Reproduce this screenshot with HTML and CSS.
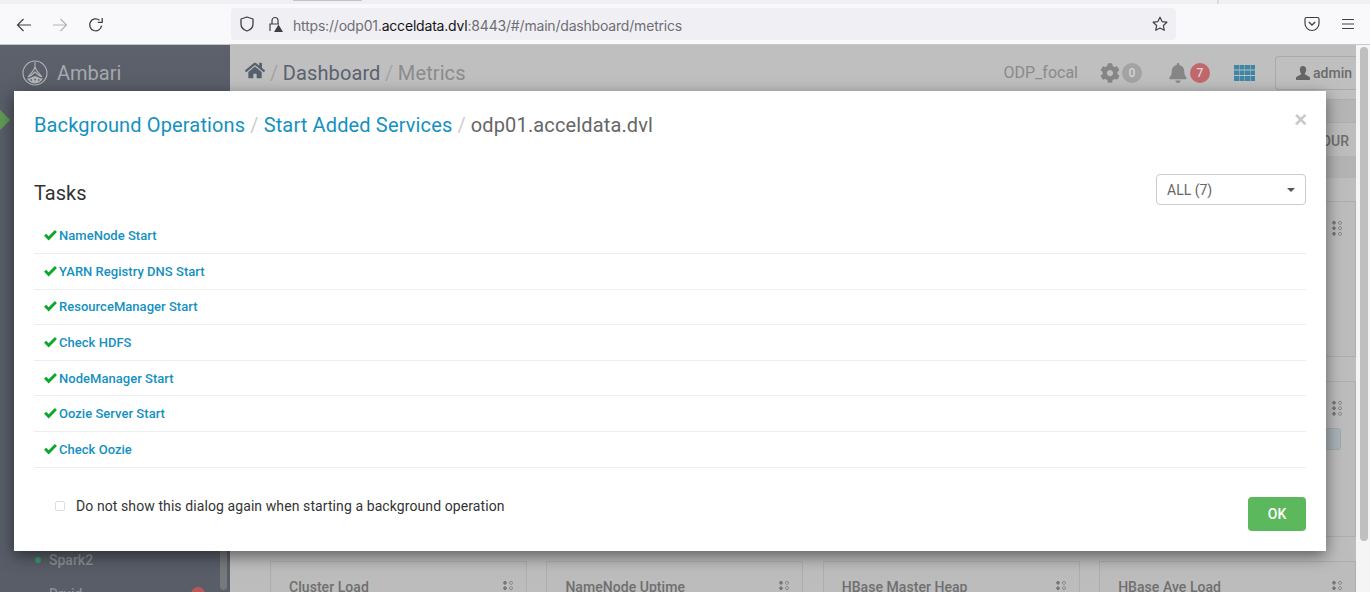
FILE: index.html
```html
<!DOCTYPE html>
<html lang="en">
<head>
<meta charset="utf-8">
<title>Ambari - Dashboard</title>
<link rel="stylesheet" href="styles.css">
</head>
<body>
<div class="tabstrip"><span class="tab-edge"></span><span class="tab-mark"></span></div>
<div class="toolbar">
  <div class="nav-buttons">
    <svg class="tb-icon" viewBox="0 0 16 16"><path d="M15 8H1.500M7.500 2 1.500 8l6 6" fill="none" stroke="#3f3f48" stroke-width="1.200"/></svg>
    <svg class="tb-icon" viewBox="0 0 16 16"><path d="M1 8h13.500M8.500 2l6 6-6 6" fill="none" stroke="#b4b4b8" stroke-width="1.200"/></svg>
    <svg class="tb-icon" viewBox="0 0 16 16"><path d="M13.600 8.700A6 6 0 1 1 11.500 3.200M14.200 1v4.400H9.800" fill="none" stroke="#3f3f48" stroke-width="1.300"/></svg>
  </div>
  <div class="urlbar">
    <svg class="shield" viewBox="0 0 16 16"><path d="M8 1 2 3v5c0 3.600 3 6 6 7 3-1 6-3.400 6-7V3z" fill="none" stroke="#3f3f48" stroke-width="1.300" stroke-linejoin="round"/></svg>
    <svg class="lock" viewBox="0 0 16 16"><path d="M3 15V8h9M5 8V4.500a3 3 0 0 1 6 0V8" fill="none" stroke="#3f3f48" stroke-width="1.200"/><path d="M11.500 8.500 16 16H7z" fill="#3f3f48"/></svg>
    <span class="url"><span class="url-dim">https://odp01.</span>acceldata.dvl<span class="url-dim">:8443/#/main/dashboard/metrics</span></span>
    <svg class="star" viewBox="0 0 16 16"><path d="m8 1.200 2.100 4.400 4.800.6-3.500 3.300.9 4.800L8 12l-4.300 2.300.9-4.800L1.100 6.200l4.800-.6z" fill="none" stroke="#3f3f48" stroke-width="1.200" stroke-linejoin="round"/></svg>
  </div>
  <div class="tool-right">
    <svg class="tb-icon" viewBox="0 0 16 16"><path d="M2.500 1.500h11A1.500 1.500 0 0 1 15 3v4.500a7 7 0 0 1-14 0V3a1.500 1.500 0 0 1 1.500-1.500z" fill="none" stroke="#3f3f48" stroke-width="1.200"/><path d="m4.800 6 3.200 3 3.200-3" fill="none" stroke="#3f3f48" stroke-width="1.300"/></svg>
    <svg class="tb-icon" viewBox="0 0 16 16"><path d="M2 3.500h12M2 8h12M2 12.500h12" stroke="#3f3f48" stroke-width="1.200"/></svg>
  </div>
</div>

<div class="page">
  <aside class="sidebar">
    <div class="brand">
      <svg class="logo" viewBox="0 0 26 26">
        <circle cx="13" cy="13" r="12" fill="none" stroke="#b3b4b6" stroke-width="1.100"/>
        <path d="M13 2v6M13 7c-1 4-4 6-7 10M13 7c1 4 4 6 7 10M6 17c3-1 5-3 7-5 2 2 4 4 7 5" fill="none" stroke="#b3b4b6" stroke-width="1.100"/>
        <path d="M5 18.500c3 .5 6-2.500 8-2.500s5 3 8 2.500c-1.500 3-5 5-8 5s-6.500-2-8-5z" fill="#b3b4b6"/>
        <path d="M8.500 20h1.500M12.300 19.500h1.500M16 20h1.500" stroke="#585d68" stroke-width="1.300"/>
      </svg>
      <span class="brand-name">Ambari</span>
    </div>
    <span class="active-mark"></span>
    <ul class="services">
      <li class="service"><span class="dot"></span>Spark2</li>
      <li class="service service-plain">Druid<span class="alert"></span></li>
    </ul>
    <span class="side-thumb"></span>
  </aside>

  <main class="main">
    <header class="topbar">
      <svg class="home" viewBox="0 0 576 512"><path d="M280.370 148.260 96 300.110V464a16 16 0 0 0 16 16l112.060-.29a16 16 0 0 0 15.920-16V368a16 16 0 0 1 16-16h64a16 16 0 0 1 16 16v95.640a16 16 0 0 0 16 16.050L464 480a16 16 0 0 0 16-16V300L295.670 148.260a12.190 12.190 0 0 0-15.300 0zM571.600 251.470 488 182.560V44.050a12 12 0 0 0-12-12h-56a12 12 0 0 0-12 12v72.610L318.470 43a48 48 0 0 0-61 0L4.340 251.470a12 12 0 0 0-1.600 16.900l25.500 31A12 12 0 0 0 45.150 301l235.220-193.740a12.190 12.190 0 0 1 15.300 0L530.900 301a12 12 0 0 0 16.900-1.600l25.500-31a12 12 0 0 0-1.700-16.930z"/></svg>
      <span class="crumb"><span class="slash">/</span><span class="crumb-strong">Dashboard</span><span class="slash">/</span><span class="crumb-dim">Metrics</span></span>
      <span class="cluster">ODP_focal</span>
      <span class="status gear-status">
        <svg class="gear" viewBox="0 0 512 512"><path d="M487.400 315.700l-42.600-24.600c4.300-23.200 4.300-47 0-70.200l42.600-24.600c4.900-2.800 7.100-8.600 5.500-14-11.100-35.600-30-67.800-54.700-94.600-3.800-4.100-10-5.100-14.800-2.300L380.800 110c-17.900-15.400-38.500-27.300-60.800-35.100V25.800c0-5.600-3.900-10.500-9.400-11.700-36.700-8.200-74.300-7.800-109.200 0-5.500 1.200-9.400 6.100-9.400 11.700V75c-22.200 7.900-42.800 19.800-60.800 35.100L88.700 85.500c-4.900-2.800-11-1.900-14.800 2.300-24.700 26.700-43.600 58.900-54.700 94.600-1.700 5.400.6 11.200 5.500 14L67.300 221c-4.300 23.200-4.300 47 0 70.200l-42.600 24.600c-4.900 2.800-7.100 8.600-5.500 14 11.100 35.600 30 67.800 54.700 94.600 3.800 4.100 10 5.100 14.800 2.300l42.600-24.600c17.900 15.400 38.500 27.300 60.800 35.100v49.200c0 5.600 3.900 10.500 9.400 11.700 36.700 8.200 74.300 7.800 109.200 0 5.500-1.200 9.400-6.100 9.400-11.700v-49.200c22.200-7.900 42.800-19.800 60.800-35.100l42.600 24.600c4.900 2.800 11 1.900 14.800-2.300 24.700-26.700 43.600-58.900 54.700-94.600 1.500-5.500-.7-11.300-5.600-14.100zM256 336c-44.100 0-80-35.900-80-80s35.900-80 80-80 80 35.900 80 80-35.900 80-80 80z"/></svg>
        <span class="badge badge-grey">0</span>
      </span>
      <span class="status bell-status">
        <svg class="bell" viewBox="0 0 448 512"><path d="M224 512c35.320 0 63.970-28.650 63.970-64H160.030c0 35.350 28.650 64 63.970 64zm215.390-149.710c-19.320-20.760-55.470-51.990-55.470-154.290 0-77.700-54.480-139.900-127.940-155.160V32c0-17.670-14.320-32-31.980-32s-31.980 14.330-31.980 32v20.840C118.560 68.100 64.080 130.300 64.080 208c0 102.300-36.150 133.530-55.470 154.290-6 6.450-8.660 14.160-8.610 21.710.11 16.400 12.980 32 32.100 32h383.800c19.120 0 32-15.600 32.100-32 .05-7.550-2.610-15.270-8.610-21.710z"/></svg>
        <span class="badge badge-red">7</span>
      </span>
      <svg class="apps" viewBox="0 0 21 16"><path d="M0 0h5v4.500H0zM5.500 0h5v4.500h-5zM11 0h5v4.500h-5zM16.500 0H21v4.500h-4.500zM0 5.500h5V10H0zM5.500 5.500h5V10h-5zM11 5.500h5V10h-5zM16.500 5.500H21V10h-4.500zM0 11h5v5H0zM5.500 11h5v5h-5zM11 11h5v5h-5zM16.500 11H21v5h-4.500z"/></svg>
      <span class="user-btn">
        <svg class="user" viewBox="0 0 14 14"><path d="M7 0c2 0 3.200 1.500 3.200 3.500S9 7.500 8.800 8c0 1 4.200 1.800 5.200 3.500V14H0v-2.500C1 9.800 5.200 9 5.200 8 5 7.500 3.800 5.500 3.800 3.500S5 0 7 0z"/></svg>admin
      </span>
    </header>
    <div class="subbar"></div>
    <div class="timebar"><span class="time-label">HOUR</span></div>
    <div class="band"></div>
    <section class="widgets">
      <div class="widget"><span class="grip"></span></div>
      <div class="widget"><span class="grip"></span></div>
      <div class="widget"><span class="grip"></span></div>
      <div class="widget"><span class="grip"></span></div>
      <div class="widget"><span class="grip"></span></div>
      <div class="widget"><span class="grip"></span></div>
      <div class="widget"><span class="grip"></span></div>
      <div class="widget"><span class="grip"></span><span class="widget-btn"></span></div>
      <div class="widget"><h4 class="widget-title">Cluster Load</h4><span class="grip"></span></div>
      <div class="widget"><h4 class="widget-title">NameNode Uptime</h4><span class="grip"></span></div>
      <div class="widget"><h4 class="widget-title">HBase Master Heap</h4><span class="grip"></span></div>
      <div class="widget"><h4 class="widget-title">HBase Ave Load</h4><span class="grip"></span></div>
    </section>
  </main>

  <div class="scrolltrack"><span class="scrollthumb"></span></div>

  <div class="modal">
    <div class="modal-head">
      <h3 class="modal-title"><a class="link">Background Operations</a><span class="sep">/</span><a class="link">Start Added Services</a><span class="sep">/</span><span class="host">odp01.acceldata.dvl</span></h3>
      <span class="close">×</span>
    </div>
    <div class="tasks-head">
      <h4 class="tasks-title">Tasks</h4>
      <div class="select">ALL (7)<span class="caret"></span></div>
    </div>
    <ul class="tasks">
      <li class="task"><svg class="check" viewBox="0 0 14 12"><path d="M0 6.200 2.200 4 5 6.800 11.800 0 14 2.200 5 11.500z"/></svg><a class="task-link">NameNode Start</a></li>
      <li class="task"><svg class="check" viewBox="0 0 14 12"><path d="M0 6.200 2.200 4 5 6.800 11.800 0 14 2.200 5 11.500z"/></svg><a class="task-link">YARN Registry DNS Start</a></li>
      <li class="task"><svg class="check" viewBox="0 0 14 12"><path d="M0 6.200 2.200 4 5 6.800 11.800 0 14 2.200 5 11.500z"/></svg><a class="task-link">ResourceManager Start</a></li>
      <li class="task"><svg class="check" viewBox="0 0 14 12"><path d="M0 6.200 2.200 4 5 6.800 11.800 0 14 2.200 5 11.500z"/></svg><a class="task-link">Check HDFS</a></li>
      <li class="task"><svg class="check" viewBox="0 0 14 12"><path d="M0 6.200 2.200 4 5 6.800 11.800 0 14 2.200 5 11.500z"/></svg><a class="task-link">NodeManager Start</a></li>
      <li class="task"><svg class="check" viewBox="0 0 14 12"><path d="M0 6.200 2.200 4 5 6.800 11.800 0 14 2.200 5 11.500z"/></svg><a class="task-link">Oozie Server Start</a></li>
      <li class="task"><svg class="check" viewBox="0 0 14 12"><path d="M0 6.200 2.200 4 5 6.800 11.800 0 14 2.200 5 11.500z"/></svg><a class="task-link">Check Oozie</a></li>
    </ul>
    <div class="modal-foot">
      <label class="dont-show"><span class="box"></span>Do not show this dialog again when starting a background operation</label>
      <button class="ok">OK</button>
    </div>
  </div>
</div>
</body>
</html>
```
FILE: styles.css
```css
* { box-sizing: border-box; }
html, body { margin: 0; height: 100%; overflow: hidden; }
body { display: flex; flex-direction: column; font-family: Roboto, "Liberation Sans", sans-serif; background: #fff; }
ul { list-style: none; margin: 0; padding: 0; }
h3, h4 { margin: 0; font-weight: 400; }

.tabstrip { height: 4px; background: #f0f0f4; display: flex; flex: none; }
.tab-edge { width: 69px; height: 1px; margin-left: 293px; background: #c4c4c8; }
.tab-mark { width: 2px; height: 4px; margin-left: 855px; background: #dcdce0; }

.toolbar { height: 41px; flex: none; display: flex; align-items: center; background: #f9f9fb; border-bottom: 1px solid #c8c8c8; }
.nav-buttons { display: flex; gap: 20px; padding: 2px 0 0 16px; width: 231px; flex: none; }
.tb-icon { width: 16px; height: 16px; flex: none; }
.urlbar { width: 945px; height: 32px; flex: none; background: #f0f0f4; border-radius: 4px; display: flex; align-items: center; padding: 0 8px; }
.shield { width: 16px; height: 16px; flex: none; }
.lock { width: 16px; height: 16px; margin-left: 12px; flex: none; }
.url { margin-left: 10px; padding-top: 2px; font: 14px Inter, "Liberation Sans", sans-serif; color: #15141a; white-space: nowrap; flex: 1; letter-spacing: -.19px; }
.url-dim { color: #6e6e76; }
.star { width: 16px; height: 16px; flex: none; }
.tool-right { display: flex; gap: 20px; margin-left: 128px; }

.page { flex: 1; min-height: 0; position: relative; display: flex; overflow: hidden; }

.sidebar { width: 230px; flex: none; background: #585d68; position: relative; }
.brand { height: 55px; display: flex; align-items: center; padding: 0 0 0 22px; background: linear-gradient(#5c616c, #585d68); }
.logo { width: 26px; height: 26px; flex: none; }
.brand-name { margin-left: 9px; font-size: 20px; color: #a7a9ad; }
.active-mark { position: absolute; left: -10px; top: 65px; width: 20px; height: 20px; background: #5f9a52; transform: rotate(45deg) scale(.72); }
.services { padding: 443px 0 0 35px; }
.service { height: 34px; display: flex; align-items: center; font-size: 14px; font-weight: 500; color: #8c8e92; position: relative; }
.service-plain { padding-left: 14px; }
.dot { width: 6px; height: 6px; border-radius: 50%; background: #3c9a6c; margin-right: 8px; }
.alert { position: absolute; left: 156px; top: 10px; width: 14px; height: 14px; border-radius: 50%; background: #b9585c; }
.side-thumb { position: absolute; right: 3px; top: 400px; bottom: 2px; width: 7px; border-radius: 4px; background: #77797b; }

.main { flex: 1; min-width: 0; background: #bdbdbd; display: flex; flex-direction: column; }
.topbar { height: 55px; flex: none; display: flex; align-items: center; padding: 2px 0 0 15px; border-bottom: 1px solid #aeaeae; background: #bfbfbf; }
.home { width: 20px; height: 19px; fill: #55606e; flex: none; margin-bottom: 5px; }
.crumb { margin-left: 5px; font-size: 20px; white-space: nowrap; flex: 1; letter-spacing: .1px; }
.slash { color: #a4a4a4; margin: 0 4.500px 0 0; }
.crumb-strong { color: #5a6270; margin-right: 4.500px; }
.crumb-dim { color: #8b8b8b; }
.cluster { font-size: 16px; color: #8a8a8a; margin: 0 22px 2px 0; }
.status { display: flex; align-items: center; flex: none; }
.gear { width: 20px; height: 20px; fill: #868686; }
.bell { width: 18px; height: 20px; fill: #868686; }
.badge { width: 20px; height: 20px; border-radius: 50%; display: flex; align-items: center; justify-content: center; font-size: 12px; font-weight: 500; color: #d5d5d5; margin-left: 2px; }
.gear-status { margin-right: 27px; }
.badge-grey { background: #a3a3a3; }
.badge-red { background: #c1686c; margin-left: 3px; }
.apps { width: 21px; height: 16px; fill: #3f86a4; margin-left: 24px; flex: none; }
.user-btn { width: 81px; height: 34px; margin-left: 20px; flex: none; border: 1px solid #aaa; border-right: 0; border-radius: 4px 0 0 4px; display: flex; align-items: center; padding-left: 20px; font-size: 14px; font-weight: 500; color: #6c6c6c; }
.user { width: 14px; height: 14px; fill: #666; margin-right: 3px; flex: none; }

.subbar { height: 23px; flex: none; background: #b5b5b5; border-bottom: 1px solid #aeaeae; }
.timebar { height: 33px; flex: none; display: flex; align-items: center; justify-content: flex-end; padding: 2px 7px 0 0; }
.time-label { font-size: 14px; font-weight: 500; color: #6d6d6d; }
.band { height: 22px; flex: none; background: #b3b3b3; }

.widgets { margin: 23px 0 0 40px; display: grid; grid-template-columns: repeat(4, 1fr); grid-auto-rows: 156px; gap: 24px 19.500px; }
.widget { border: 1px solid #aeaeae; background: #bcbcbc; position: relative; padding: 17px 18px; }
.widget-title { font-size: 14px; font-weight: 500; color: #6f6f6f; letter-spacing: .05px; }
.grip { position: absolute; top: 18px; right: 13px; width: 10px; height: 16px; background-image: radial-gradient(circle, #777 1.500px, transparent 2px), radial-gradient(circle, transparent .7px, #7f7f7f 1px, #7f7f7f 1.500px, transparent 2px); background-size: 4px 5.500px, 4px 5.500px; background-repeat: repeat-y; background-position: 0 0, 6px 0; }
.widget-btn { position: absolute; right: 14px; top: 46px; width: 60px; height: 22px; border: 1px solid #9eaaaf; border-radius: 3px; background: #a9b2b6; }

.scrolltrack { width: 14px; flex: none; background: #f5f5f5; padding: 2px 2px 0 4px; }
.scrollthumb { display: block; height: 494px; border-radius: 4px; background: #bfbfbf; }

.modal { position: absolute; left: 14px; top: 46px; width: 1312px; height: 460px; background: #fff; box-shadow: 0 5px 15px rgba(0,0,0,.5); padding: 0 20px; }
.modal-head { height: 83px; padding-top: 20px; display: flex; justify-content: space-between; }
.modal-title { font-size: 20px; line-height: 28px; white-space: nowrap; letter-spacing: .14px; }
.link { color: #1491c1; }
.sep { color: #ccc; margin: 0 5px; }
.host { color: #666; }
.close { font: 700 22px/18px "Liberation Sans", sans-serif; color: #c8c8c8; margin-right: -1px; }
.tasks-head { display: flex; justify-content: space-between; align-items: flex-start; }
.tasks-title { font-size: 20px; line-height: 28px; color: #333; margin-top: 5px; }
.select { width: 150px; height: 31px; border: 1px solid #ccc; border-radius: 4px; padding-left: 10px; font-size: 14px; line-height: 30px; color: #666; position: relative; }
.caret { position: absolute; right: 10px; top: 13px; border: 4px solid transparent; border-top-color: #555; border-bottom: 0; }
.tasks { margin-top: 11.500px; }
.task { height: 35.600px; border-bottom: 1px solid #eee; padding-left: 10px; display: flex; align-items: center; }
.check { width: 13px; height: 11px; fill: #0ca82a; flex: none; margin-right: 2px; }
.task-link { font-size: 13px; font-weight: 500; color: #1491c1; letter-spacing: .03px; }
.modal-foot { display: flex; justify-content: space-between; padding-top: 29.500px; }
.dont-show { display: flex; align-items: center; height: 18px; font-size: 14px; color: #333; padding-left: 21px; letter-spacing: .09px; }
.box { width: 10px; height: 10px; border: 1px solid #ddd; border-radius: 2px; margin-right: 11px; }
.ok { width: 58px; height: 34px; border: 0; border-radius: 4px; background: #5cb85c; color: #fff; font: 500 14px Roboto, sans-serif; }
```
